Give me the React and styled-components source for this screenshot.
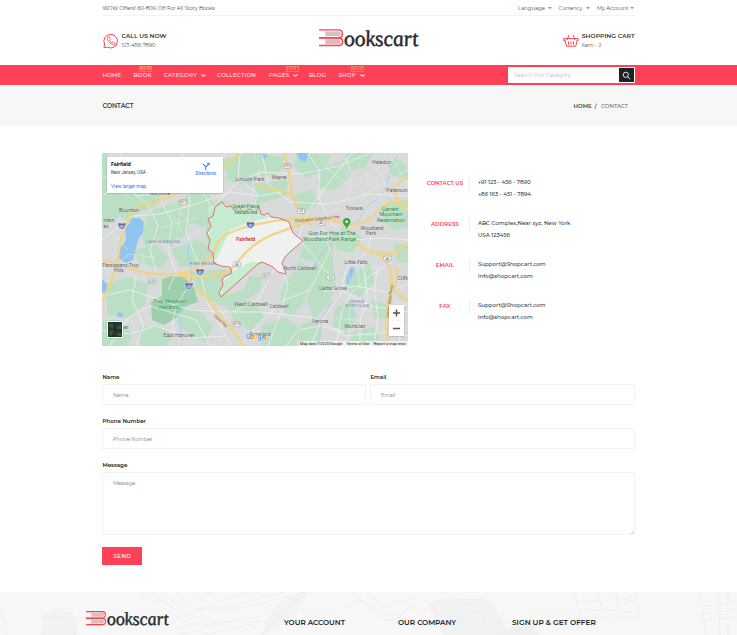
import React from 'react';
import styled, { createGlobalStyle } from 'styled-components';

const RED = '#ff4157';

const Global = createGlobalStyle`
  *, *::before, *::after { box-sizing: border-box; }
  body { margin: 0; background: #fff; overflow: hidden; font-family: Montserrat, Inter, sans-serif; }
  input, textarea, button { font-family: inherit; margin: 0; border-radius: 0; }
`;

const Page = styled.div`
  display: flex;
  flex-direction: column;
  height: 635px;
  overflow: hidden;
  color: #333;
`;

const Container = styled.div`
  width: 532.2px;
  margin-left: 102.4px;
  flex-shrink: 0;
`;

const Text = styled.span`
  display: block;
  white-space: nowrap;
  font-size: ${(p) => p.$size || 5.25}px;
  line-height: ${(p) => p.$lh || 8}px;
  font-weight: ${(p) => p.$weight || 400};
  letter-spacing: ${(p) => p.$ls || 0}px;
  color: ${(p) => p.$color || '#484848'};
`;

const TopBar = styled(Container)`
  height: 16px;
  display: flex;
  justify-content: space-between;
  align-items: center;
  border-bottom: 1px solid #f3f3f3;
`;

const TopMenu = styled.div`
  display: grid;
  grid-template-columns: 40.5px 38.5px 37.5px;
`;

const TopMenuItem = styled.div`
  display: flex;
  justify-content: space-between;
  align-items: center;
  padding-right: ${(p) => p.$pr}px;
`;

const Header = styled(Container)`
  height: 49px;
  display: grid;
  grid-template-columns: 216.8px 1fr 72px;
  align-items: start;
  padding-top: 12px;
`;

const HeaderBlock = styled.div`
  display: flex;
  align-items: flex-start;
  gap: 2.5px;
  padding: 5px 0 0 0.5px;
`;

const HeaderLines = styled.div`
  margin-top: -0.6px;
`;

const NavBand = styled.nav`
  height: 20px;
  background: ${RED};
  flex-shrink: 0;
`;

const NavRow = styled(Container)`
  height: 20px;
  display: flex;
  justify-content: space-between;
  align-items: center;
`;

const NavList = styled.div`
  display: grid;
  grid-template-columns: 31px 30.5px 53px 52px 40px 29.5px 27px;
`;

const NavItem = styled.div`
  position: relative;
  display: flex;
  justify-content: space-between;
  align-items: center;
  padding-right: ${(p) => p.$pr || 0}px;
`;

const Badge = styled.span`
  position: absolute;
  top: -5px;
  left: ${(p) => p.$left}px;
  width: 13px;
  height: 6px;
  border: 1px solid #fd7a52;
  color: #ffd9a8;
  font-size: 4px;
  line-height: 4px;
  display: flex;
  justify-content: center;
  letter-spacing: 0.1px;
`;

const Search = styled.form`
  width: 126.5px;
  height: 16px;
  background: #fff;
  display: flex;
  align-items: center;
  padding: 1px 1px 1px 5.5px;
`;

const SearchInput = styled.input`
  flex: 1;
  min-width: 0;
  border: 0;
  padding: 0;
  outline: 0;
  font-size: 5.5px;
  height: 12px;
  &::placeholder { color: #b8b8b8; }
`;

const SearchButton = styled.button`
  width: 15px;
  height: 14px;
  border: 0;
  padding: 0;
  background: #1f2125;
  display: flex;
  align-items: center;
  justify-content: center;
`;

const Crumbs = styled.div`
  margin-top: 1px;
  height: 40px;
  background: #f7f7f7;
  flex-shrink: 0;
`;

const CrumbRow = styled(Container)`
  height: 39px;
  display: flex;
  align-items: center;
  justify-content: space-between;
`;

const CrumbPath = styled.div`
  display: grid;
  grid-template-columns: 21px 6.5px 33.5px;
`;

const Main = styled(Container)`
  padding-top: 27px;
  height: 466px;
`;

const ContactRow = styled.section`
  display: grid;
  grid-template-columns: 305.5px 1fr;
  column-gap: 18px;
`;

const MapFrame = styled.div`
  position: relative;
  height: 193px;
  overflow: hidden;
  svg.map { display: block; }
`;

const PlaceCard = styled.div`
  position: absolute;
  left: 4.5px;
  top: 4px;
  width: 116px;
  height: 36px;
  background: #fff;
  box-shadow: 0 0.5px 1.5px rgba(0, 0, 0, 0.35);
  display: flex;
  justify-content: space-between;
  padding: 3px 6.5px 0 4px;
  font-family: Roboto, sans-serif;
`;

const Directions = styled.div`
  display: flex;
  flex-direction: column;
  align-items: center;
  padding-top: 2px;
`;

const ZoomBox = styled.div`
  position: absolute;
  right: 4px;
  top: 152px;
  width: 15px;
  height: 31px;
  background: #fff;
  box-shadow: 0 0.5px 1.5px rgba(0, 0, 0, 0.3);
`;

const Satellite = styled.div`
  position: absolute;
  left: 4.5px;
  top: 168px;
  width: 16.5px;
  height: 17px;
  border: 1px solid #fff;
  box-shadow: 0 0 1px rgba(0, 0, 0, 0.3);
  background: #26382b;
  svg { display: block; }
`;

const MapCredits = styled.div`
  position: absolute;
  right: 0;
  bottom: 0;
  height: 5.5px;
  padding: 0 2px 0 1px;
  background: rgba(245, 245, 245, 0.75);
  display: flex;
  gap: 4px;
  font-family: Roboto, sans-serif;
`;

const InfoList = styled.div`
  padding-top: 23.5px;
`;

const InfoItem = styled.div`
  height: 41px;
  display: grid;
  grid-template-columns: 44px 1fr;
`;

const InfoLabel = styled.div`
  display: flex;
  justify-content: center;
  height: 14px;
  border-right: 1px solid #efefef;
  padding: 2.5px 5px 0 0;
`;

const InfoValues = styled.div`
  padding-left: 8px;
  margin-top: -0.8px;
`;

const Form = styled.form`
  margin-top: 27px;
  display: grid;
  grid-template-columns: 264px 264.2px;
  column-gap: 4px;
  row-gap: 12px;
`;

const Field = styled.label`
  display: block;
  grid-column: ${(p) => (p.$wide ? '1 / 3' : 'auto')};
`;

const control = `
  display: block;
  width: 100%;
  margin-top: 3px;
  border: 1px solid #f3f3f3;
  outline: 0;
  background: #fff;
  padding: 0 9.5px;
  font-size: 5.1px;
  &::placeholder { color: #737b83; opacity: 1; }
`;

const Input = styled.input`
  ${control}
  height: 21px;
`;

const TextAreaWrap = styled.div`
  position: relative;
`;

const TextArea = styled.textarea`
  ${control}
  height: 63px;
  padding-top: 7px;
  line-height: 7px;
  resize: none;
`;

const Grip = styled.svg`
  position: absolute;
  right: 1px;
  bottom: 1px;
`;

const SendButton = styled.button`
  width: 40px;
  height: 18px;
  border: 0;
  padding: 0;
  background: ${RED};
  color: #fff;
  font-size: 5.6px;
  font-weight: 500;
  letter-spacing: 0.3px;
`;

const Footer = styled.footer`
  position: relative;
  height: 43px;
  background: #f7f7f7;
  overflow: hidden;
  flex-shrink: 0;
`;

const FooterArt = styled.svg`
  position: absolute;
  inset: 0;
`;

const FooterRow = styled.div`
  position: relative;
  display: grid;
  grid-template-columns: 198px 114px 114px 1fr;
  margin-left: 86px;
  padding-top: 18px;
`;

const FooterHeading = styled.div`
  padding-top: 8.5px;
`;

const LogoSvg = styled.svg`
  display: block;
  overflow: visible;
`;

const Chevron = ({ size = 5, color = '#ffe3e6' }) => (
  <svg width={size} height={size} viewBox="0 0 4 4" fill="none" stroke={color} strokeWidth="0.85">
    <path d="M0.4 1.2 L2 2.7 L3.6 1.2" />
  </svg>
);

const Caret = () => (
  <svg width="4" height="4" viewBox="0 0 4 4">
    <path d="M0 0.9H4L2 3.2Z" fill="#999" />
  </svg>
);

const Logo = ({ width }) => (
  <LogoSvg width={width} height={width * 0.2} viewBox="0 0 100 20">
    <g fill="#d9bfb6">
      <path d="M5.5 3.4H20.5Q22.3 5.5 20.5 8H5.5L7 7L5.5 6L7 5L5.5 4Z" />
      <path d="M5.5 11.2H20.5Q22.3 13.5 20.5 16H5.5L7 15L5.5 14L7 13L5.5 12Z" />
    </g>
    <g fill="none" stroke={RED} strokeWidth="1.4">
      <path d="M0 1.9H19.5C24.3 1.9 24.3 9.5 19.5 9.5H0" />
      <path d="M0 9.9H19.5C24.6 9.9 24.6 17.4 19.5 17.4H0" />
    </g>
    <text
      transform="translate(25.5 17.7) skewX(8)"
      fontFamily="Liberation Serif, serif"
      fontStyle="italic"
      fontSize="22"
      fill="#2a2a2c"
      stroke="#2a2a2c"
      strokeWidth="0.5"
      textLength="73.5"
      lengthAdjust="spacingAndGlyphs"
    >
      ookscart
    </text>
  </LogoSvg>
);

const PhoneIcon = () => (
  <svg width="16" height="16" viewBox="0 0 16 16" fill="none" stroke={RED} strokeWidth="1" strokeLinejoin="round">
    <path d="M1 14.7 L1.5 11 A6.8 6.8 0 1 1 4.6 14.2 Z" />
    <path d="M5.3 3.9 C4.2 4.4 4 5.7 4.8 7.3 C5.8 9.3 7.4 10.8 9.3 11.5 C10.6 12 11.9 11.6 12.3 10.5 L10.3 8.9 L9.1 9.8 C8 9.3 7.1 8.4 6.7 7.4 L7.4 6.2 L6.3 3.9 Z" strokeWidth="0.8" />
  </svg>
);

const CartIcon = () => (
  <svg width="17" height="15" viewBox="0 0 17 15" fill="none" stroke={RED} strokeWidth="1.05" strokeLinejoin="round">
    <path d="M0.8 5.5H16V7.5H14.8L13.4 13.5H3.6L2.1 7.5H0.8Z" />
    <path d="M4.3 7L6.2 1.6M12.6 7L10.7 1.6" />
    <path d="M5.8 8.5V11.9M8.4 8.5V11.9M11 8.5V11.9" />
  </svg>
);

const NAV = [
  { t: 'HOME' },
  { t: 'BOOK', badge: 'NEW', left: 5.8 },
  { t: 'CATEGORY', chev: 10.5 },
  { t: 'COLLECTION' },
  { t: 'PAGES', chev: 10.5, badge: 'HOT', left: 16.8 },
  { t: 'BLOG' },
  { t: 'SHOP', chev: 0.5, badge: 'SALE', left: 12.8 },
];

const INFO = [
  { label: 'CONTACT US', lines: ['+91 123 - 456 - 7890', '+86 163 - 451 - 7894'] },
  { label: 'ADDRESS', lines: ['ABC Complex,Near xyz, New York', 'USA 123456'] },
  { label: 'EMAIL', lines: ['Support@Shopcart.com', 'info@shopcart.com'] },
  { label: 'FAX', lines: ['Support@Shopcart.com', 'info@shopcart.com'] },
];

const GREENS = [
  'M102 197L120 188L128 200L122 212L112 222L102 226Z',
  'M102 153H108V190L102 194Z',
  'M130 193L160 194L155 206L138 212L128 222L120 215Z',
  'M150 212L178 202L192 214L186 234L170 246L158 236L148 250L142 236Z',
  'M224 160L252 153L258 168L250 186L228 180Z',
  'M207 206L221 200L237 208L258 205L262 216L240 224L228 236L215 246L206 240Z',
  'M186 195L206 190L214 206L204 226L190 222Z',
  'M255 153L283 158L280 172L262 176Z',
  'M256 184L286 180L288 194L270 200L256 204Z',
  'M298 153L330 156L322 170L306 178L294 166Z',
  'M322 170L344 160L350 176L334 190L318 186Z',
  'M346 153L372 153L366 166L352 170Z',
  'M388 164L400 160L408 170L408 178L392 176Z',
  'M292 196L312 190L318 202L304 214L296 208Z',
  'M382 206L408 200L408 226L396 230L384 222Z',
  'M334 235L348 228L362 238L352 252L338 250Z',
  'M306 240L334 243L330 256L318 262L300 258Z',
  'M192 272L240 268L230 290L221 298L244 290L250 276L262 278L258 292L244 300L228 306L208 300L196 286Z',
  'M106 284L128 278L148 284L144 304L128 318L108 314Z',
  'M102 322L118 320L132 334L126 346H102Z',
  'M140 328L160 326L172 336L166 346H140Z',
  'M176 306L200 312L212 326L206 342L190 334L178 324Z',
  'M225 300L254 302L264 318L250 330L236 324Z',
  'M262 326L286 318L300 330L294 346H262Z',
  'M282 290L300 262L312 272L304 300L292 316L280 308Z',
  'M314 262L332 256L336 284L326 306L314 318L308 300Z',
  'M346 276L370 264L374 282L360 296L350 292Z',
  'M336 308L350 300L356 316L346 334L334 326Z',
  'M372 300L386 304L384 318L374 318Z',
  'M394 244L408 246V262L398 262Z',
  'M300 326L316 320L322 336L310 346L300 346Z',
  'M352 332L374 328L380 338L362 346L350 344Z',
  'M134 250L156 246L168 258L160 268L140 262Z',
  'M172 250L198 240L212 252L206 264L180 266Z',
];

const LOCAL = [
  'M102 176L124 186L148 204L158 226L150 250L156 270',
  'M102 240L132 216L160 214L196 204L230 192L260 196L290 190',
  'M120 153L136 196L172 192L210 166L226 153',
  'M160 200L172 222L168 250L176 272L168 290',
  'M182 153L190 200L186 232L200 268L206 300L232 346',
  'M196 180L212 208L240 180L262 172L300 174L340 166L370 153',
  'M240 153L238 178L258 194L252 212L240 234L228 270',
  'M262 153L268 184L290 202L330 204L370 194L408 196',
  'M308 153L320 172L318 196L330 222L350 240L384 238L408 240',
  'M352 153L326 186L306 214L298 240L276 266L258 300L232 312',
  'M102 296L130 290L160 300L190 310L226 312L262 312L314 318L346 336L390 332L408 336',
  'M110 346L128 318L150 306L196 320L210 346',
  'M240 346L262 320L284 300L310 290L330 250L322 228',
  'M300 240L318 262L344 292L372 306L408 312',
  'M310 346L322 320L340 296L346 270L368 250L372 232',
  'M276 256L288 284L282 310L268 346',
  'M324 292L356 286L386 292L408 284',
  'M336 346L342 310L352 292L370 276L392 262',
  'M360 346L360 320L368 296L362 262',
  'M374 346L378 316L374 290L378 266',
  'M102 330L130 334L156 326L190 338L226 336',
  'M136 346L144 326L132 300L136 276',
  'M184 346L172 326L176 306L186 290',
  'M400 346L398 316L408 300',
  'M286 346L298 330L320 326L344 332',
  'M236 250L262 246L280 234M246 262L272 240M252 236L264 254',
];

const GRID = [
  'M366 176L400 153M362 186L404 160M360 196L408 170M370 202L408 180',
  'M366 172L384 204M374 166L394 200M382 160L402 194M390 156L408 186M358 184L368 206',
  'M326 168L344 182L368 174M340 160L352 184L346 198',
  'M340 262L384 270M346 252L350 284M356 250L360 290M366 268L364 312M340 304L378 312M336 318L372 322',
  'M330 328L374 336M350 302L348 346M384 322L406 330M394 300L408 306M390 282L408 276',
  'M168 208L182 232M174 202L190 226M160 228L196 218M164 244L198 232M180 210L176 244',
  'M112 232L128 250M108 248L124 232M106 270L130 254L156 258M142 252L146 272',
  'M206 318L224 310L220 340M236 312L248 334L262 330M216 306L230 322',
];

const YELLOW = [
  'M102 302L116 270L121 240L131 210L152 203L176 194L206 177L222 168L240 153',
  'M102 261C118 260 134 274 156 274C190 277 212 264 216 246C220 232 248 224 290 219L330 220L354 224C374 224 376 206 392 202L408 202',
  'M176 274C196 276 214 280 230 270C240 260 252 240 280 232L306 222',
  'M180 274C192 280 192 288 206 296C216 308 218 318 230 326C236 334 238 340 244 346',
  'M284 153C290 166 290 184 292 196C300 210 304 220 312 226',
  'M255 185L274 190L292 193',
  'M350 236L364 250C384 252 394 264 391 290L386 318L388 346',
  'M340 222C352 230 352 246 370 251L392 254L408 244',
  'M408 210L398 204L394 188L408 176',
  'M398 268L394 290L408 302',
];

const BORDER =
  'M222 202L226 207L231 206L234 210L239 207L243 212L250 209L256 213L259 207L261 214L264 215L268 213L271 217L279 218L289 222L293 233L303 241L292 250L285 257L282 263L286 274L278 272L273 267L262 262L258 264L221 297L219 293L223 285L222 279L226 276L232 273L230 267L221 266L214 263L213 253L208 249L210 240L207 233L211 226L208 219L213 216L215 207Z';

const PLACES = [
  [381.5, 163.6, 'Haledon', 19],
  [396.8, 192, 'Paterson', 21, 6],
  [279, 179, 'Wayne', 15],
  [354, 209.5, 'Totowa', 17],
  [372, 229.5, 'Woodland', 23],
  [371, 235, 'Park', 10],
  [250, 180.5, 'Lincoln Park', 29],
  [129, 211.5, 'Boonton', 20],
  [160, 194.5, 'Montville', 20],
  [120.5, 266.5, 'Parsippany-Troy', 36],
  [119, 272, 'Hills', 10],
  [179, 336.5, 'East Hanover', 31],
  [251, 305.5, 'West Caldwell', 34],
  [300, 270, 'North Caldwell', 33],
  [279, 307.5, 'Caldwell', 19],
  [356, 263.5, 'Little Falls', 23],
  [333, 289.5, 'Cedar Grove', 28],
  [320, 322.5, 'Verona', 16],
  [355, 328, 'Montclair', 21],
  [402.5, 279.5, 'Clift', 10.5, 6],
  [260, 335.5, 'Roseland', 21],
  [124, 328.5, 'over', 9],
  [109, 222, 'ntain', 11],
  [106, 228, 'es', 5],
];

const PARKS = [
  [246, 208, 'Great-Piece', 27],
  [246, 213.5, 'Meadows', 23],
  [390, 210.5, 'Garrett', 17],
  [391, 216, 'Mountain', 23],
  [391, 221.5, 'Reservation', 28],
  [170, 303, 'Troy Meadows', 34],
  [169, 308.5, 'Wetlands', 21],
  [332, 235.3, 'Gun For Hire at The', 47],
  [329.5, 241.1, 'Woodland Park Range', 53],
];

const Shield = ({ x, y, n }) => (
  <g>
    <path d={`M${x - 4} ${y - 3}Q${x} ${y - 1.8} ${x + 4} ${y - 3}Q${x + 4.6} ${y + 2} ${x} ${y + 3.6}Q${x - 4.6} ${y + 2} ${x - 4} ${y - 3}Z`} fill="#4474c4" stroke="#fff" strokeWidth="0.5" />
    <path d={`M${x - 3.7} ${y - 2.3}Q${x} ${y - 1.4} ${x + 3.7} ${y - 2.3}`} stroke="#c8414f" strokeWidth="0.9" fill="none" />
    <text x={x} y={y + 1.8} fontSize="3.3" fill="#fff" textAnchor="middle">{n}</text>
  </g>
);

const Route = ({ x, y, n }) => (
  <g>
    <rect x={x - 3.8} y={y - 2.4} width="7.6" height="4.8" rx="1.6" fill="#f7f7f7" stroke="#888" strokeWidth="0.5" />
    <text x={x} y={y + 1.3} fontSize="3.6" fill="#555" textAnchor="middle">{n}</text>
  </g>
);

const AreaMap = () => (
  <svg className="map" width="305.5" height="193" viewBox="102 153 305.5 193" fontFamily="Roboto, sans-serif">
    <rect x="102" y="153" width="307" height="193" fill="#d9dada" />
    <g fill="#bbdfc4" stroke="#bbdfc4" strokeWidth="1.2" strokeLinejoin="round">{GREENS.map((d) => <path key={d} d={d} />)}</g>
    <path d="M162 279L172 276L184 277L194 288L198 302L184 307L176 318L164 325L152 320L151 302L162 296Z" fill="#9dcfaa" />
    <path d={BORDER} fill="#eff1f1" />
    <path d="M208 208L222 203L240 208L260 211L271 217L250 222L230 230L216 260L208 248L210 228Z" fill="#c5ecd0" />
    <path d="M262 262L221 297L223 282L232 272L250 262Z" fill="#c9ecd1" />
    <g fill="#91c5f0">
      <path d="M132 218L139 218L144 222L143 232L138 240L135 252L133 260L126 263L118 258L119 250L126 240L125 227L130 223Z" />
      <path d="M350 267L355 268L352 276L349 284L346 284L347 275Z" />
      <path d="M102 279L107 284L106 292L102 293Z" />
      <path d="M296 153H308L306 162L300 160Z" />
      <path d="M260 153L268 155L264 160Z" />
      <path d="M119 312L124 314L121 318L117 316Z" />
    </g>
    <g fill="none" stroke="#9fcdf2" strokeWidth="0.9">
      <path d="M400 153C384 168 392 190 376 200C358 208 366 222 348 226C334 230 332 246 320 256L314 270" />
      <path d="M318 346L322 318L332 300" />
      <path d="M190 240C184 256 196 268 190 290L180 316L182 346" />
    </g>
    <g fill="none" stroke="#f1f3f3" strokeWidth="0.75" strokeLinejoin="round">{LOCAL.map((d) => <path key={d} d={d} />)}</g>
    <g fill="none" stroke="#e8eaea" strokeWidth="0.55">{GRID.map((d) => <path key={d} d={d} />)}</g>
    <g fill="none" stroke="#eccb72" strokeWidth="2.1" strokeLinejoin="round">{YELLOW.map((d) => <path key={d} d={d} />)}</g>
    <g fill="none" stroke="#f7d88a" strokeWidth="1.2" strokeLinejoin="round">{YELLOW.map((d) => <path key={d} d={d} />)}</g>
    <path d={BORDER} fill="none" stroke="#e0605c" strokeWidth="0.9" strokeLinejoin="round" />
    <g fill="#54585c" textAnchor="middle" stroke="#e8e8e8" strokeWidth="0.5" paintOrder="stroke">
      {PLACES.map(([x, y, t, w, s]) => (
        <text key={t} x={x} y={y} fontSize={s || 5.6} textLength={w} lengthAdjust="spacingAndGlyphs">{t}</text>
      ))}
    </g>
    <g fill="#277d4c" textAnchor="middle" stroke="#d5efdb" strokeWidth="0.5" paintOrder="stroke">
      {PARKS.map(([x, y, t, w]) => (
        <text key={t} x={x} y={y} fontSize="5.7" textLength={w} lengthAdjust="spacingAndGlyphs">{t}</text>
      ))}
    </g>
    <g fontSize="3.8" fill="#7083a8" textAnchor="middle">
      <text x="163" y="242.5" textLength="34">LAKE HIAWATHA</text>
      <text x="203" y="264.5" textLength="26">PINE BROOK</text>
      <text x="357" y="302.5" textLength="14">UPPER</text>
      <text x="357" y="307" textLength="24">MONTCLAIR</text>
    </g>
    <g fontSize="4.2" fill="#96682f">
      <text transform="translate(295 222.5) rotate(-6)" textLength="45">Christopher Columbus Hwy</text>
      <text transform="translate(213.5 316) rotate(43)" textLength="17">Essex Fwy</text>
      <text transform="translate(389 318) rotate(-83)" textLength="33">Garden State Pkwy</text>
    </g>
    <text x="245.7" y="241.3" fontSize="5.4" fontWeight="700" fill="#d02a2a" textAnchor="middle" textLength="19" lengthAdjust="spacingAndGlyphs" stroke="#fff" strokeWidth="0.7" paintOrder="stroke">Fairfield</text>
    <Shield x={122} y={226} n="287" />
    <Shield x={250.5} y={225} n="80" />
    <Shield x={200} y={272} n="80" />
    <Shield x={189} y={286} n="280" />
    <Route x={183} y={202} n="621" />
    <Route x={287} y={166} n="202" />
    <Route x={301} y={211} n="23" />
    <Route x={321} y={223} n="46" />
    <Route x={237} y={264.5} n="46" />
    <Route x={152} y={281.5} n="637" />
    <Route x={266.5} y={275.5} n="527" />
    <Route x={330.5} y={277.5} n="23" />
    <Route x={387.5} y={258.5} n="46" />
    <Route x={237} y={324} n="613" />
    <path d="M346.7 229.5C346 225.5 343 225 343 221.8A3.7 3.7 0 0 1 350.4 221.8C350.4 225 347.4 225.5 346.7 229.5Z" fill="#34a846" />
    <circle cx="346.7" cy="221.8" r="1.3" fill="#fff" />
    <text x="246" y="338.8" fontSize="6.4" fontWeight="500" stroke="#fff" strokeWidth="0.5" paintOrder="stroke">
      <tspan fill="#4285f4">G</tspan><tspan fill="#ea4335">o</tspan><tspan fill="#fbbc05">o</tspan><tspan fill="#4285f4">g</tspan><tspan fill="#34a853">l</tspan><tspan fill="#ea4335">e</tspan>
    </text>
  </svg>
);

const FooterSketch = () => (
  <FooterArt width="737" height="43" viewBox="0 592 737 43" fill="none" stroke="#ededef" strokeWidth="0.8" strokeLinejoin="round">
    <path fill="#f2f4f4" d="M43 616L58 612L72 614L77 624L76 635H41L44 626Z" />
    <path d="M44 617L72 620L74 635M46 612L60 609L70 608L72 614M40 628L76 628M0 607L5 620L6 635M0 610L4 626" />
    <path d="M134 592L156 602L178 618C190 606 210 606 222 612L260 604L306 592M142 592L168 604L180 614L196 598L214 592M178 618L206 608L238 606M150 592L176 610M162 592L180 608M176 592L184 606" />
    <path d="M178 620L200 626L262 616M170 630L206 622L270 622L292 606M180 635L220 624M204 635L252 624M224 608L284 592M216 602L252 592" />
    <path fill="#f2f3f3" d="M306 592C284 598 270 612 266 626L262 635C278 628 300 614 306 592Z" />
    <path d="M304 593L260 635M296 596L270 610M300 600L272 618M290 612L270 622" />
    <path d="M346 610L358 598L370 606M350 594L370 606M367 600L382 612L400 616L416 604M367 594L384 606L416 598M368 606L386 620L404 618" />
    <path fill="#f0f3f2" d="M428 604L438 600L484 599L492 604L502 624L508 635H446L438 622Z" />
    <path d="M430 608L486 603L504 628M434 606L444 635M456 614L478 610L486 624L464 630ZM492 626L506 620L514 632" />
    <path fill="#efefef" stroke="none" d="M500 632L512 628L524 626L540 624L534 629L540 635H496Z" />
    <path d="M575 592L580 622L602 616L618 620L640 616L636 592M576 600L600 602L616 598L638 602M598 592L603 616M616 592L620 619M578 612L602 610L638 612" />
    <path d="M700 592L706 635M718 592L720 635M728 592V635M700 614L737 610M702 620L737 618M704 606L737 602" />
  </FooterArt>
);

export default function App() {
  return (
    <Page>
      <Global />
      <TopBar>
        <Text $ls={-0.04} $size={5.2}>WOW Offers! 60-80% Off For All Story Books</Text>
        <TopMenu>
          <TopMenuItem $pr={7}><Text>Language</Text><Caret /></TopMenuItem>
          <TopMenuItem $pr={7.5}><Text>Currency</Text><Caret /></TopMenuItem>
          <TopMenuItem $pr={0.5}><Text>My Account</Text><Caret /></TopMenuItem>
        </TopMenu>
      </TopBar>

      <Header>
        <HeaderBlock>
          <PhoneIcon />
          <HeaderLines>
            <Text $size={6.1} $weight={600} $color="#333" $lh={8.5}>CALL US NOW</Text>
            <Text $size={5.2} $lh={8.5}>123-456-7890</Text>
          </HeaderLines>
        </HeaderBlock>
        <Logo width={101} />
        <HeaderBlock>
          <CartIcon />
          <HeaderLines>
            <Text $size={6.1} $weight={600} $color="#333" $lh={8.5}>SHOPPING CART</Text>
            <Text $size={5.2} $lh={8.5}>item - 2</Text>
          </HeaderLines>
        </HeaderBlock>
      </Header>

      <NavBand>
        <NavRow>
          <NavList>
            {NAV.map((n) => (
              <NavItem key={n.t} $pr={n.chev}>
                <Text $size={5.5} $weight={500} $color="#ffe6e9" $ls={0.28}>{n.t}</Text>
                {n.chev && <Chevron />}
                {n.badge && <Badge $left={n.left}>{n.badge}</Badge>}
              </NavItem>
            ))}
          </NavList>
          <Search>
            <SearchInput placeholder="Search Our Category" />
            <SearchButton type="button" aria-label="Search">
              <svg width="9" height="9" viewBox="0 0 9 9" fill="none" stroke="#fff" strokeWidth="0.9">
                <circle cx="3.8" cy="3.8" r="2.6" />
                <path d="M5.7 5.7L8.2 8.2" />
              </svg>
            </SearchButton>
          </Search>
        </NavRow>
      </NavBand>

      <Crumbs>
        <CrumbRow>
          <Text $size={6.3} $weight={600} $color="#3a3a3a">CONTACT</Text>
          <CrumbPath>
            <Text $size={5.5} $weight={600} $color="#444">HOME</Text>
            <Text $size={5.5} $weight={600} $color="#444">/</Text>
            <Text $size={5.5} $weight={500} $color="#707070">CONTACT</Text>
          </CrumbPath>
        </CrumbRow>
      </Crumbs>

      <Main>
        <ContactRow>
          <MapFrame>
            <AreaMap />
            <PlaceCard>
              <div>
                <Text $size={5.4} $weight={700} $color="#111" $lh={9}>Fairfield</Text>
                <Text $size={4.7} $color="#444">New Jersey, USA</Text>
                <Text $size={4.9} $color="#2f78e6" $lh={18}>View larger map</Text>
              </div>
              <Directions>
                <svg width="8" height="8" viewBox="0 0 8 8" fill="none" stroke="#3c82ea" strokeWidth="1.1">
                  <path d="M3.8 8V5L1 1.8M3.8 5.2L6.2 2.4" />
                  <path d="M4.6 0.8H7.6V3.8Z" fill="#3c82ea" stroke="none" />
                </svg>
                <Text $size={4.6} $weight={500} $color="#3c82ea">Directions</Text>
              </Directions>
            </PlaceCard>
            <Satellite>
              <svg width="14.5" height="15" viewBox="0 0 14 15">
                <path d="M0 3L5 1L8 4L3 6ZM7 6L12 3L14 7L9 9ZM1 9L6 8L7 12L2 14ZM9 11L13 10L14 14H9Z" fill="#3b5240" />
                <path d="M5 0L7 7L4 15M7 7L14 9" stroke="#172119" fill="none" />
              </svg>
            </Satellite>
            <ZoomBox>
              <svg width="15" height="31" viewBox="0 0 15 31" stroke="#555" strokeWidth="1.5" fill="none">
                <path d="M4 8H11M7.5 4.5V11.5M4 23.5H11" />
                <path d="M2.5 15.5H12.5" stroke="#e6e6e6" strokeWidth="0.6" />
              </svg>
            </ZoomBox>
            <MapCredits>
              <Text $size={3.9} $lh={5.5} $color="#222">Map data ©2020 Google</Text>
              <Text $size={3.9} $lh={5.5} $color="#222">Terms of Use</Text>
              <Text $size={3.9} $lh={5.5} $color="#222">Report a map error</Text>
            </MapCredits>
          </MapFrame>

          <InfoList>
            {INFO.map((i) => (
              <InfoItem key={i.label}>
                <InfoLabel><Text $size={5.5} $weight={600} $color={RED}>{i.label}</Text></InfoLabel>
                <InfoValues>
                  {i.lines.map((l) => <Text key={l} $size={5.52} $weight={500} $lh={12} $color="#383838">{l}</Text>)}
                </InfoValues>
              </InfoItem>
            ))}
          </InfoList>
        </ContactRow>

        <Form>
          <Field><Text $size={5.5} $weight={600} $color="#222">Name</Text><Input placeholder="Name" /></Field>
          <Field><Text $size={5.5} $weight={600} $color="#222">Email</Text><Input placeholder="Email" /></Field>
          <Field $wide><Text $size={5.5} $weight={600} $color="#222">Phone Number</Text><Input placeholder="Phone Number" /></Field>
          <Field $wide>
            <Text $size={5.5} $weight={600} $color="#222">Message</Text>
            <TextAreaWrap>
              <TextArea placeholder="Message" />
              <Grip width="4" height="4" viewBox="0 0 4 4" stroke="#aaa" strokeWidth="0.5"><path d="M0.5 4L4 0.5M2.2 4L4 2.2" /></Grip>
            </TextAreaWrap>
          </Field>
          <SendButton type="button">SEND</SendButton>
        </Form>
      </Main>

      <Footer>
        <FooterSketch />
        <FooterRow>
          <Logo width={84} />
          <FooterHeading><Text $size={7.25} $weight={600} $color="#222">YOUR ACCOUNT</Text></FooterHeading>
          <FooterHeading><Text $size={7.25} $weight={600} $color="#222">OUR COMPANY</Text></FooterHeading>
          <FooterHeading><Text $size={7.35} $weight={600} $color="#222">SIGN UP &amp; GET OFFER</Text></FooterHeading>
        </FooterRow>
      </Footer>
    </Page>
  );
}
